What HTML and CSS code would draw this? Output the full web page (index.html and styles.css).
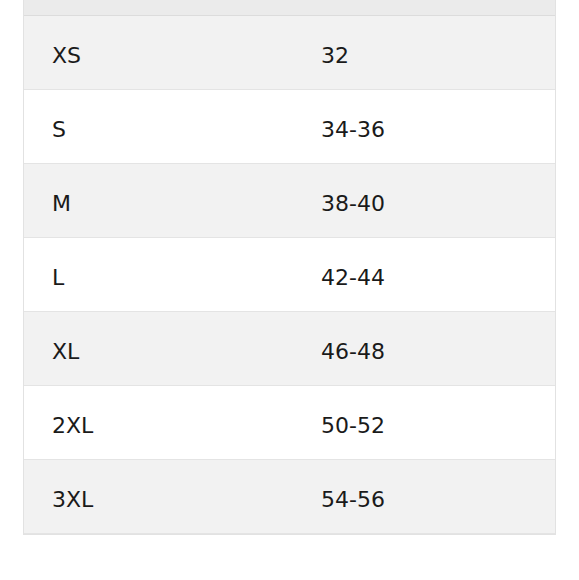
FILE: index.html
```html
<!DOCTYPE html>
<html>
<head>
<meta charset="utf-8">
<link rel="stylesheet" href="styles.css">
</head>
<body>
<div class="size-table">
  <div class="row head"><div class="cell"></div><div class="cell"></div></div>
  <div class="row shade"><div class="cell">XS</div><div class="cell">32</div></div>
  <div class="row"><div class="cell">S</div><div class="cell">34-36</div></div>
  <div class="row shade"><div class="cell">M</div><div class="cell">38-40</div></div>
  <div class="row"><div class="cell">L</div><div class="cell">42-44</div></div>
  <div class="row shade"><div class="cell">XL</div><div class="cell">46-48</div></div>
  <div class="row"><div class="cell">2XL</div><div class="cell">50-52</div></div>
  <div class="row shade"><div class="cell">3XL</div><div class="cell">54-56</div></div>
</div>
</body>
</html>
```
FILE: styles.css
```css
html, body {
  margin: 0;
  padding: 0;
  background: #ffffff;
}
body {
  font-family: "DejaVu Sans", "Noto Sans", sans-serif;
  color: #1a1a1a;
}
.size-table {
  margin-left: 23px;
  width: 533px;
  box-sizing: border-box;
  border-left: 1px solid #e2e2e2;
  border-right: 1px solid #e2e2e2;
  border-bottom: 1px solid #e2e2e2;
}
.row {
  display: grid;
  grid-template-columns: 269px 1fr;
  height: 74px;
  box-sizing: border-box;
  border-bottom: 1px solid #e4e4e4;
  align-items: center;
  background: #ffffff;
}
.row.shade {
  background: #f2f2f2;
}
.row.head {
  height: 16px;
  background: #ebebeb;
  border-bottom: 1px solid #dcdcdc;
}
.cell {
  padding-left: 28px;
  padding-top: 6px;
  font-size: 22px;
  line-height: 30px;
}
```
